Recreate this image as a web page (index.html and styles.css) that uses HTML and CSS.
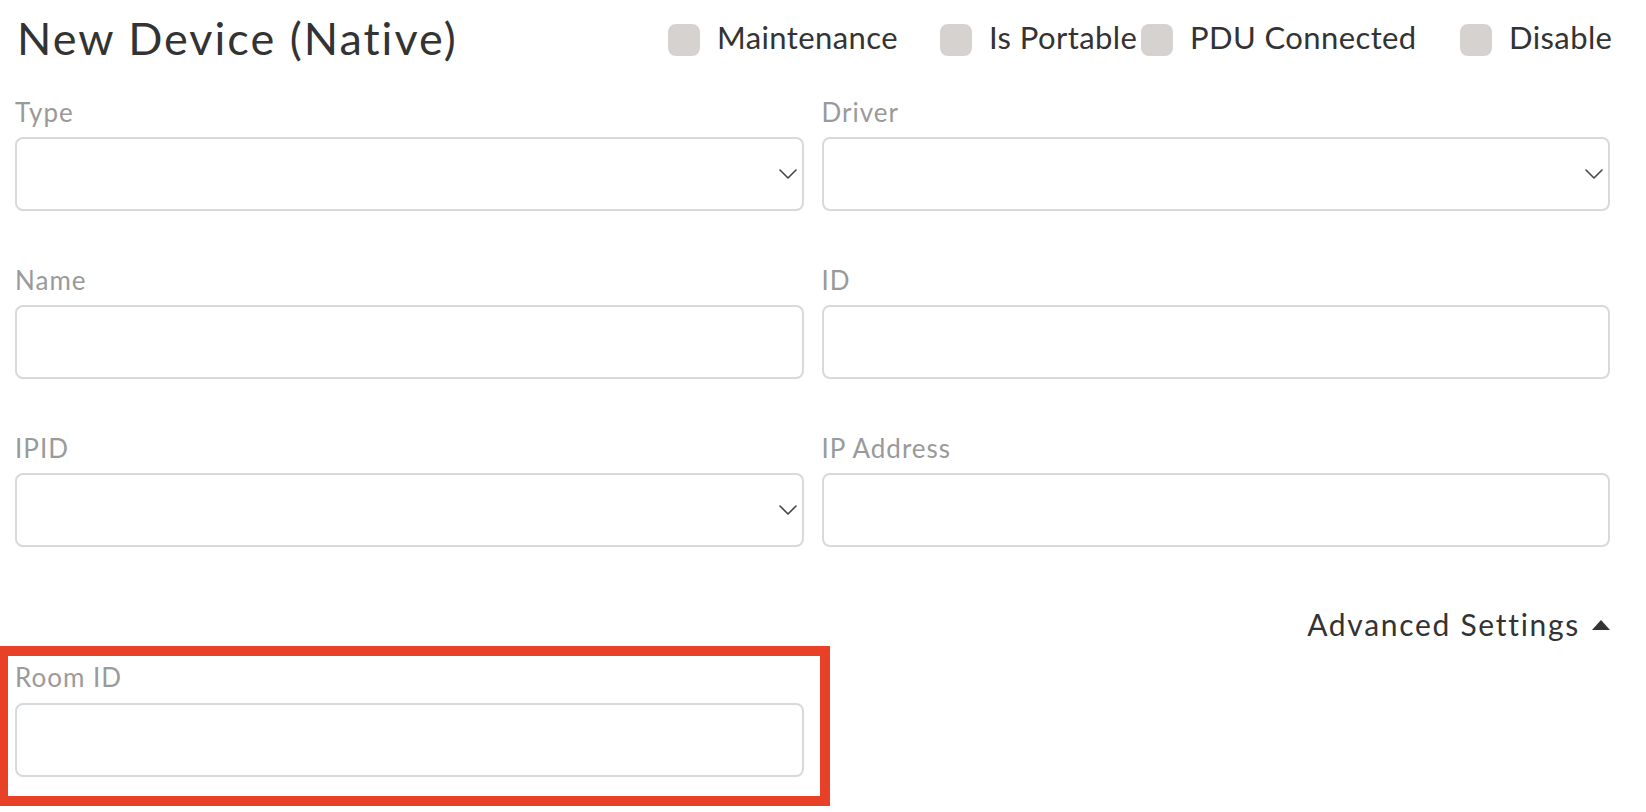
FILE: index.html
```html
<!DOCTYPE html>
<html lang="en">
<head>
<meta charset="utf-8">
<title>New Device (Native)</title>
<link rel="stylesheet" href="styles.css">
</head>
<body>
<div class="page">
  <header class="header">
    <h1 class="title">New Device (Native)</h1>
    <div class="flags">
      <label class="flag"><span class="box"></span><span class="flag-text">Maintenance</span></label>
      <label class="flag"><span class="box"></span><span class="flag-text">Is Portable</span></label>
      <label class="flag"><span class="box"></span><span class="flag-text">PDU Connected</span></label>
      <label class="flag"><span class="box"></span><span class="flag-text">Disable</span></label>
    </div>
  </header>

  <div class="fields">
    <div class="field">
      <div class="label">Type</div>
      <div class="input select">
        <svg class="chev" width="18" height="10" viewBox="0 0 18 10"><polyline points="1,1 9,9 17,1" fill="none" stroke="#444" stroke-width="1.6" stroke-linecap="round" stroke-linejoin="round"/></svg>
      </div>
    </div>
    <div class="field">
      <div class="label">Driver</div>
      <div class="input select">
        <svg class="chev" width="18" height="10" viewBox="0 0 18 10"><polyline points="1,1 9,9 17,1" fill="none" stroke="#444" stroke-width="1.6" stroke-linecap="round" stroke-linejoin="round"/></svg>
      </div>
    </div>
    <div class="field">
      <div class="label">Name</div>
      <div class="input"></div>
    </div>
    <div class="field">
      <div class="label">ID</div>
      <div class="input"></div>
    </div>
    <div class="field">
      <div class="label">IPID</div>
      <div class="input select">
        <svg class="chev" width="18" height="10" viewBox="0 0 18 10"><polyline points="1,1 9,9 17,1" fill="none" stroke="#444" stroke-width="1.6" stroke-linecap="round" stroke-linejoin="round"/></svg>
      </div>
    </div>
    <div class="field">
      <div class="label">IP Address</div>
      <div class="input"></div>
    </div>
  </div>

  <div class="advanced">
    <span class="advanced-text">Advanced Settings</span>
    <svg class="tri" width="18" height="10" viewBox="0 0 18 10"><polygon points="0,10 9,0 18,10" fill="#333"/></svg>
  </div>

  <div class="highlight">
    <div class="field">
      <div class="label">Room ID</div>
      <div class="input"></div>
    </div>
  </div>
</div>
</body>
</html>
```

FILE: styles.css
```css
* { box-sizing: border-box; }

html, body {
  margin: 0;
  padding: 0;
  background: #ffffff;
}

body {
  font-family: "Lato", "Open Sans", sans-serif;
  color: #333333;
}

.page {
  width: 1646px;
  padding: 0 36px 0 15px;
}

.header {
  height: 80px;
  display: flex;
  align-items: center;
  justify-content: space-between;
}

.title {
  margin: 0 0 5px 2px;
  font-size: 45px;
  font-weight: 400;
  line-height: 70px;
  color: #333333;
  letter-spacing: 2px;
}

.flags {
  display: grid;
  grid-template-columns: 272px 201px 319px 150px;
  align-items: center;
}

.flag {
  display: flex;
  align-items: center;
  white-space: nowrap;
}

.box {
  width: 32px;
  height: 32px;
  border-radius: 8px;
  background: #d6d2cf;
  flex: none;
}

.flag-text {
  margin-left: 17px;
  margin-bottom: 7px;
  font-size: 31px;
  line-height: 40px;
  letter-spacing: 0.4px;
  color: #333333;
}

.fields {
  display: grid;
  grid-template-columns: 1fr 1fr;
  column-gap: 18px;
  row-gap: 52px;
  padding-top: 15px;
}

.label {
  font-size: 26px;
  line-height: 34px;
  letter-spacing: 1px;
  color: #9a9a9a;
  margin-bottom: 8px;
}

.input {
  height: 74px;
  border: 2px solid #d6dadd;
  border-radius: 8px;
  background: #ffffff;
}

.select {
  display: flex;
  align-items: center;
  justify-content: flex-end;
  padding-right: 5px;
}

.advanced {
  margin-top: 57px;
  margin-bottom: 2px;
  height: 40px;
  display: flex;
  align-items: center;
  justify-content: flex-end;
}

.advanced-text {
  font-size: 30px;
  line-height: 40px;
  letter-spacing: 1.7px;
  color: #333333;
}

.tri {
  margin-left: 12px;
  margin-top: 2px;
}

.highlight {
  width: 830px;
  margin-left: -15px;
  border: 10px solid #e94128;
  border-left-width: 8px;
  padding: 4px 16px 19px 7px;
}

.highlight .label {
  margin-bottom: 9px;
}
```
